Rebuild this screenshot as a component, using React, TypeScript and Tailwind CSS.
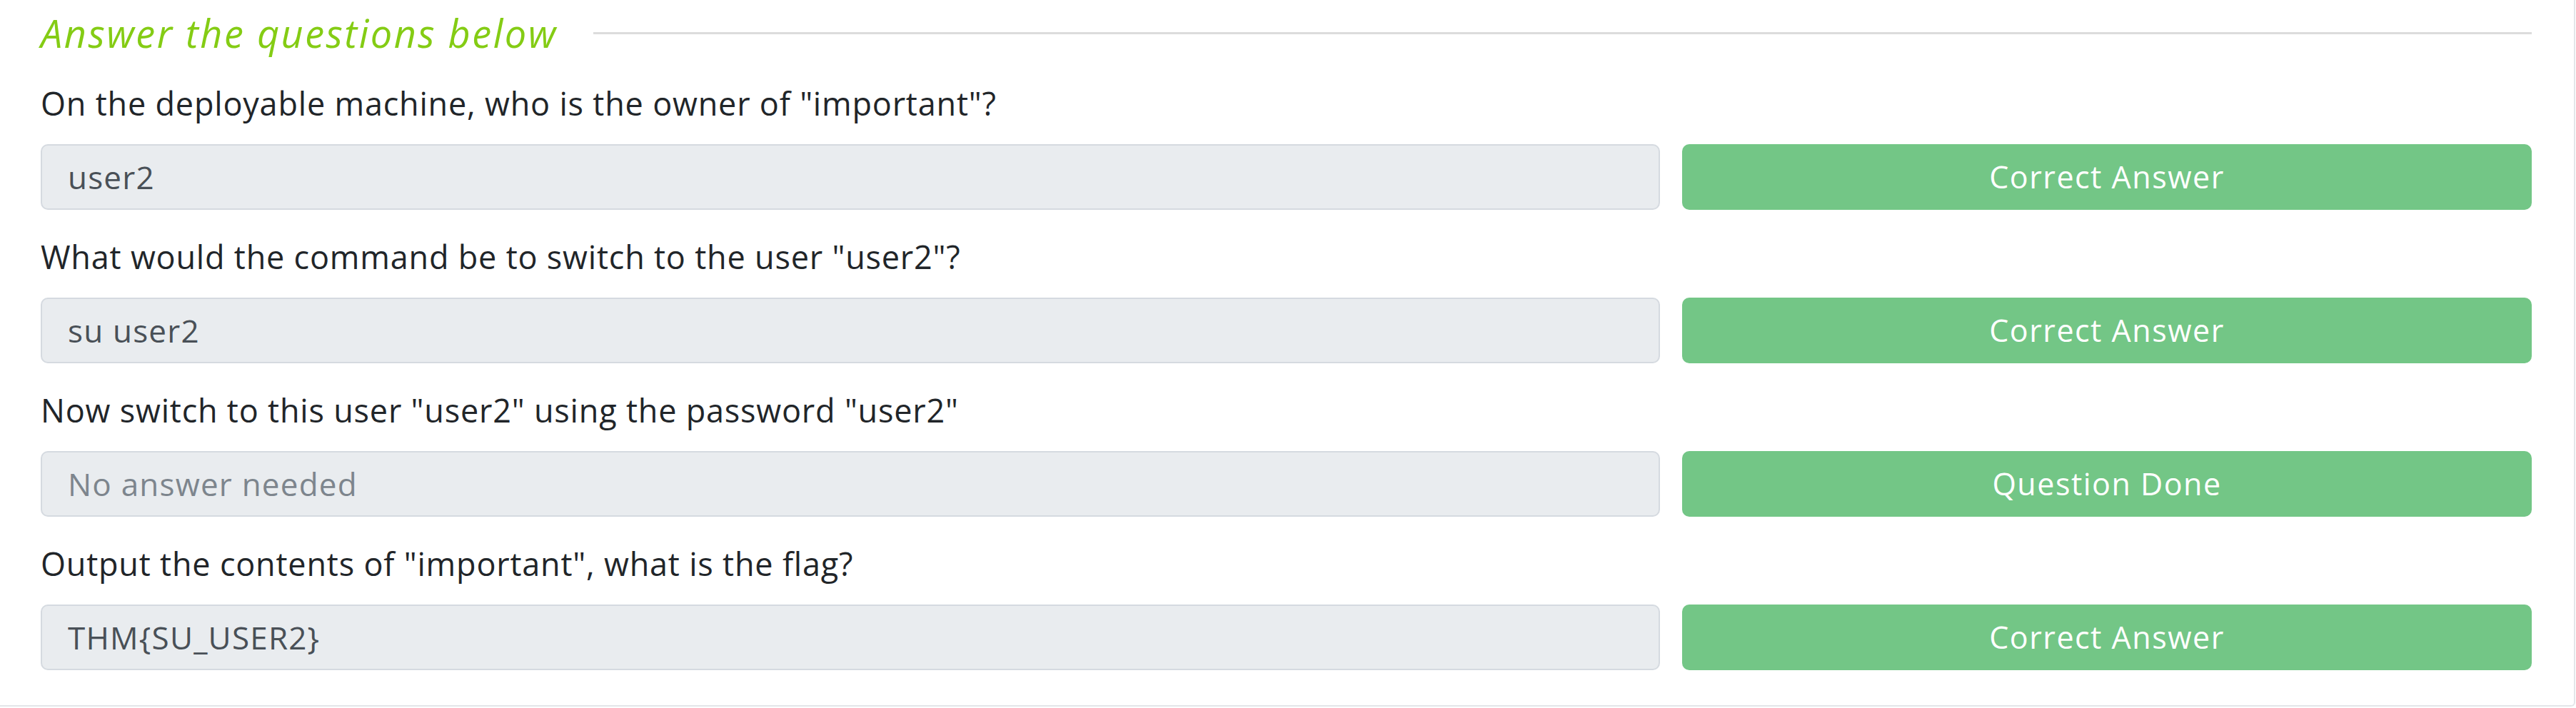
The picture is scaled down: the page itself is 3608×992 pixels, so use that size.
import React from "react";

interface Question {
  text: string;
  answer?: string;
  placeholder?: string;
  status: string;
}

const questions: Question[] = [
  {
    text: 'On the deployable machine, who is the owner of "important"?',
    answer: "user2",
    status: "Correct Answer",
  },
  {
    text: 'What would the command be to switch to the user "user2"?',
    answer: "su user2",
    status: "Correct Answer",
  },
  {
    text: 'Now switch to this user "user2" using the password "user2"',
    placeholder: "No answer needed",
    status: "Question Done",
  },
  {
    text: 'Output the contents of "important", what is the flag?',
    answer: "THM{SU_USER2}",
    status: "Correct Answer",
  },
];

const QuestionRow: React.FC<{ q: Question }> = ({ q }) => {
  return (
    <div className="flex flex-col">
      {/* Question text */}
      <p className="h-[67px] text-[45px] leading-[67px] tracking-[0.8px] text-[#212529]">
        {q.text}
      </p>

      {/* Answer + status */}
      <div className="mt-[24px] flex gap-[31px]">
        <input
          type="text"
          readOnly
          value={q.answer ?? ""}
          placeholder={q.placeholder}
          className="h-[92px] flex-1 rounded-[10px] border-2 border-[#d5dae0] bg-[#e9ecef] pl-[36px] text-[44px] tracking-[1.2px] text-[#495057] outline-none placeholder:text-[#7d858d]"
        />
        <button
          type="button"
          className="h-[92px] w-[1190px] rounded-[10px] bg-[#73c686] text-[43px] tracking-[1.5px] text-white"
        >
          {q.status}
        </button>
      </div>
    </div>
  );
};

export default function App() {
  return (
    <div className="h-[992px] w-[3608px] bg-white font-['Open_Sans',sans-serif]">
      <div className="h-[990px] w-[3607px] rounded-br-[6px] border-r-2 border-b-2 border-[#e3e6e9] pl-[57px] pr-[59px] pt-[16px]">
        {/* Header */}
        <div className="flex h-[60px] items-center gap-[50px]">
          <h3 className="text-[54px] italic leading-[60px] tracking-[2.5px] text-[#84cc14]">
            Answer the questions below
          </h3>
          <div className="h-[3px] flex-1 bg-[#dcdcdc]" />
        </div>

        {/* Questions */}
        <div className="mt-[35px] flex flex-col gap-[32px]">
          {questions.map((q, i) => (
            <QuestionRow key={i} q={q} />
          ))}
        </div>
      </div>
    </div>
  );
}
